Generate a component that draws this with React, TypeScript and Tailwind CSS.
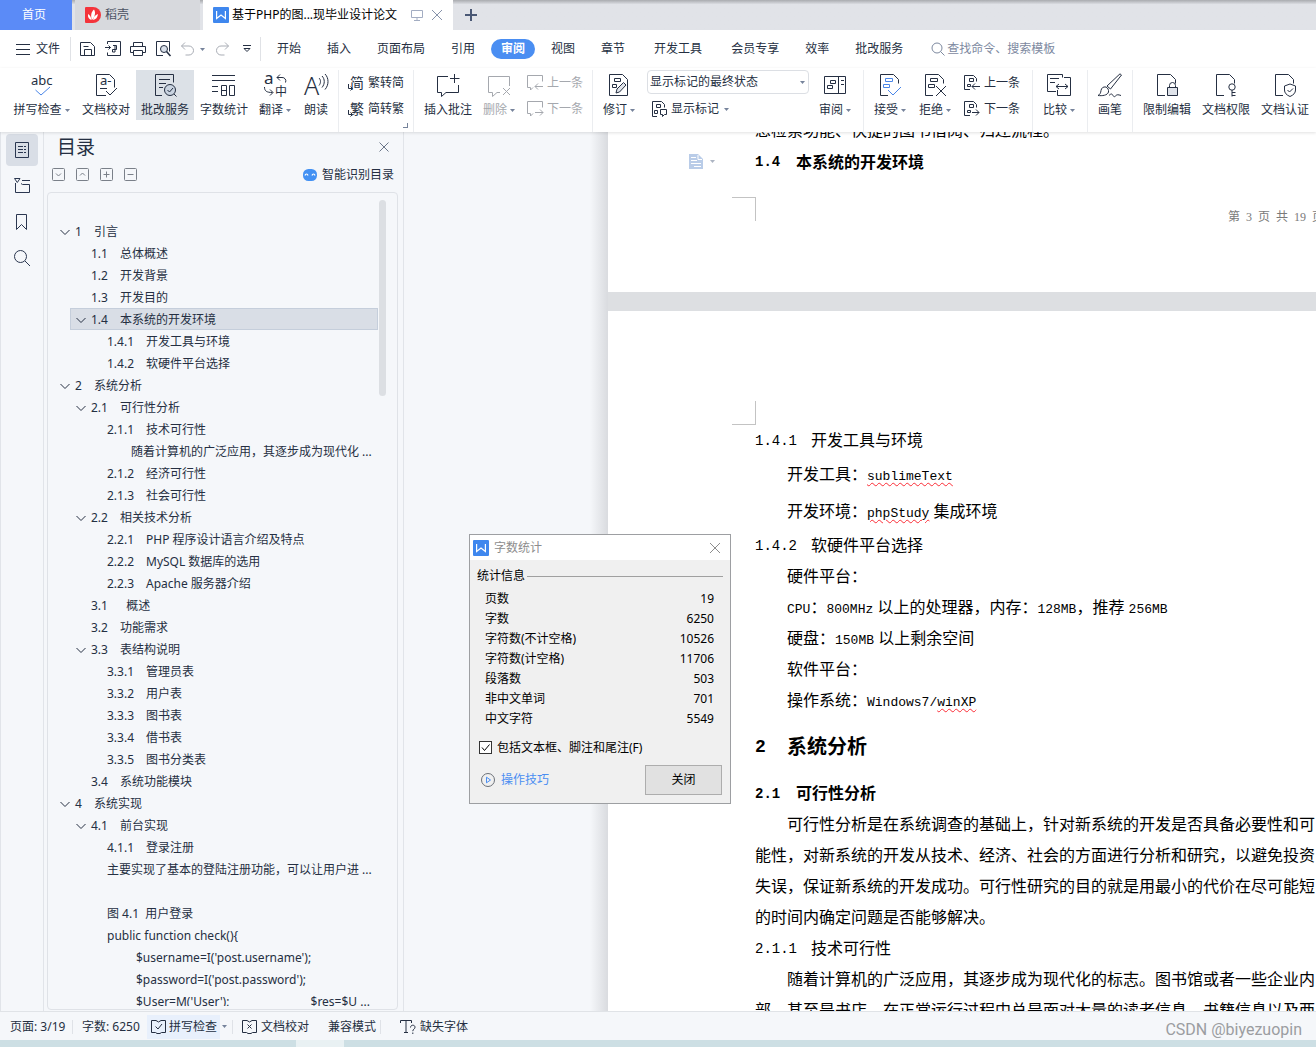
import React, { useState } from "react";
import clsx from "clsx";

type IconProps = {
  d?: string;
  size?: number;
  className?: string;
  children?: React.ReactNode;
};

function Icon({ d, size = 24, className, children }: IconProps) {
  return (
    <svg
      width={size}
      height={size}
      viewBox={`0 0 ${size} ${size}`}
      fill="none"
      stroke="currentColor"
      strokeWidth={1}
      aria-hidden="true"
      className={clsx("shrink-0 overflow-visible", className)}
    >
      {d && <path d={d} />}
      {children}
    </svg>
  );
}

function Caret({ className }: { className?: string }) {
  return (
    <svg width="5" height="3" viewBox="0 0 5 3" aria-hidden="true" className={clsx("shrink-0 fill-[#76839b]", className)}>
      <path d="M0 0h5L2.5 3z" />
    </svg>
  );
}

function WpsLogo({ className }: { className?: string }) {
  return (
    <svg width="16" height="16" viewBox="0 0 16 16" aria-hidden="true" className={clsx("shrink-0", className)}>
      <rect width="16" height="16" rx="1" fill="#3f87ee" />
      <path d="M3.600 4v7.500L8 8l4.400 3.500V4" fill="none" stroke="#fff" strokeWidth="1.200" />
    </svg>
  );
}

function Sep() {
  return <span className="h-[62px] w-px shrink-0 bg-[#ebedf0]" />;
}

type ToolProps = {
  label: string;
  icon: React.ReactNode;
  width: string;
  caret?: boolean;
  active?: boolean;
  disabled?: boolean;
};

function Tool({ label, icon, width, caret, active, disabled }: ToolProps) {
  return (
    <button
      disabled={disabled}
      className={clsx(
        "flex h-[50px] shrink-0 flex-col items-center gap-[3px] pt-[3px]",
        width,
        active && "bg-[#dce1e7]",
        disabled && "text-[#a5a8ae]"
      )}
    >
      {icon}
      <span className="flex items-center gap-[3px] leading-5 whitespace-nowrap">
        {label}
        {caret && <Caret />}
      </span>
    </button>
  );
}

function SmallTool({ label, icon, caret, disabled }: Omit<ToolProps, "width" | "active">) {
  return (
    <button disabled={disabled} className={clsx("flex h-6 items-center gap-1 whitespace-nowrap", disabled && "text-[#a5a8ae]")}>
      {icon}
      {label}
      {caret && <Caret className="ml-px" />}
    </button>
  );
}

const docShape = "M10 22.5H2.5v-21h13l5 5v4";
const markBoxes = "M7.5 5.5h7v3h-7z M5.5 11.5h6v3h-6z";

const menus = ["开始", "插入", "页面布局", "引用", "审阅", "视图", "章节", "开发工具", "会员专享", "效率", "批改服务"];

type Node = { level: number; num?: string; text: string; open?: boolean };

const outline: Node[] = [
  { level: 1, num: "1", text: "引言", open: true },
  { level: 2, num: "1.1", text: "总体概述" },
  { level: 2, num: "1.2", text: "开发背景" },
  { level: 2, num: "1.3", text: "开发目的" },
  { level: 2, num: "1.4", text: "本系统的开发环境", open: true },
  { level: 3, num: "1.4.1", text: "开发工具与环境" },
  { level: 3, num: "1.4.2", text: "软硬件平台选择" },
  { level: 1, num: "2", text: "系统分析", open: true },
  { level: 2, num: "2.1", text: "可行性分析", open: true },
  { level: 3, num: "2.1.1", text: "技术可行性" },
  { level: 4, text: "随着计算机的广泛应用，其逐步成为现代化 ..." },
  { level: 3, num: "2.1.2", text: "经济可行性" },
  { level: 3, num: "2.1.3", text: "社会可行性" },
  { level: 2, num: "2.2", text: "相关技术分析", open: true },
  { level: 3, num: "2.2.1", text: "PHP 程序设计语言介绍及特点" },
  { level: 3, num: "2.2.2", text: "MySQL 数据库的选用" },
  { level: 3, num: "2.2.3", text: "Apache 服务器介绍" },
  { level: 2, num: "3.1", text: "\u00a0\u00a0概述" },
  { level: 2, num: "3.2", text: "功能需求" },
  { level: 2, num: "3.3", text: "表结构说明", open: true },
  { level: 3, num: "3.3.1", text: "管理员表" },
  { level: 3, num: "3.3.2", text: "用户表" },
  { level: 3, num: "3.3.3", text: "图书表" },
  { level: 3, num: "3.3.4", text: "借书表" },
  { level: 3, num: "3.3.5", text: "图书分类表" },
  { level: 2, num: "3.4", text: "系统功能模块" },
  { level: 1, num: "4", text: "系统实现", open: true },
  { level: 2, num: "4.1", text: "前台实现", open: true },
  { level: 3, num: "4.1.1", text: "登录注册" },
  { level: 3, text: "主要实现了基本的登陆注册功能，可以让用户进 ..." },
  { level: 3, text: "" },
  { level: 3, text: "图 4.1  用户登录" },
  { level: 3, text: "public function check(){" },
  { level: 5, text: "$username=I('post.username');" },
  { level: 5, text: "$password=I('post.password');" },
  { level: 5, text: "$User=M('User');                          $res=$U ..." },
];

const indent: Record<number, string> = {
  1: "ml-1.5",
  2: "ml-[22px]",
  3: "ml-[38px]",
  4: "ml-[62px]",
  5: "ml-[67px]",
};

const numWidth: Record<number, string> = {
  1: "w-[19px]",
  2: "w-[29px]",
  3: "w-[39px]",
};

const stats = [
  ["页数", "19"],
  ["字数", "6250"],
  ["字符数(不计空格)", "10526"],
  ["字符数(计空格)", "11706"],
  ["段落数", "503"],
  ["非中文单词", "701"],
  ["中文字符", "5549"],
];

function TitleTabs() {
  return (
    <div className="flex h-[30px] shrink-0 bg-gradient-to-b from-[#a9abaf] via-[#e1e3e8] via-15% to-[#e1e3e8]">
      <button className="mr-[3px] w-[72px] bg-[#5b8bf7] pr-1 text-white">首页</button>
      <button className="mr-[3px] flex w-[125px] items-center gap-1 bg-[#d7d9dd] pl-[10px] text-[#4b5263]">
        <svg width="16" height="16" viewBox="0 0 16 16" aria-hidden="true">
          <path d="M1 0h7a8 8 0 010 16H1a1 1 0 01-1-1V1a1 1 0 011-1z" fill="#f4343b" />
          <path d="M9 2.500c2 3 1 7-2 10.500C5.500 9 6 5 9 2.500z M3 7c2 1 3 3 3.500 6C4 12.500 2.500 10 3 7z M13 7c-.5 3.500-2 5.500-5 6 .5-3 2-5 5-6z" fill="#fff" />
        </svg>
        稻壳
      </button>
      <div className="flex w-[250px] items-center bg-white pl-[10px] text-black">
        <WpsLogo className="mr-[3px]" />
        <span className="whitespace-nowrap">基于PHP的图...现毕业设计论文</span>
        <Icon size={12} className="ml-auto text-[#a3adc2]" d="M.5 1.500h11v7H.5z M6 8.500v3 M3 11.500h6" />
        <button aria-label="关闭标签" className="mr-[10px] ml-2 text-[#8793ab]">
          <Icon size={12} d="M1 1l10 10M11 1L1 11" />
        </button>
      </div>
      <button aria-label="新建" className="ml-3 text-[#4a5875]">
        <Icon size={12}>
          <path d="M6 0v12M0 6h12" strokeWidth="2" />
        </Icon>
      </button>
    </div>
  );
}

function MenuBar() {
  return (
    <nav className="flex h-[38px] shrink-0 items-center bg-white">
      <button className="flex w-[70px] items-center gap-[6px] pl-4">
        <Icon size={14} d="M0 2.500h14M0 7.500h14M0 12.500h14" />
        文件
      </button>
      <span className="h-6 w-px bg-[#e0e2e6]" />
      <div className="flex w-[189px] items-center pl-[9px]">
        <button aria-label="保存">
          <Icon size={16} d="M.5 14.500V1.500h10l4 4v9z M4.500 14.500v-6h7v6 M3.500 5.500h5" />
        </button>
        <button aria-label="输出为PDF" className="ml-[9px]">
          <Icon size={16} d="M2.500 3V.5h13v14h-13v-3 M0 6.500h5.500M3.500 4.500l2 2-2 2 M8 4.500h3.500v4H7.500v2.500h2.500V4.500" />
        </button>
        <button aria-label="打印" className="ml-[9px]">
          <Icon size={16} d="M3.500 5.500v-4h9v4 M3.500 11.500h-3v-6h15v6h-3 M3.500 9.500h9v5h-9z" />
        </button>
        <button aria-label="打印预览" className="ml-[9px]">
          <Icon size={16} d="M8 14.500H1.500V.5h13v10">
            <circle cx="9" cy="8" r="3.500" fill="#d9e0ea" />
            <path d="M11.500 10.500l4 4.500" strokeWidth="1.600" />
          </Icon>
        </button>
        <button aria-label="撤销" className="ml-[9px] text-[#a9adb5]">
          <Icon size={16} d="M5 1.500L1.500 5 5 8.500 M1.500 5h7.500a4.500 4.500 0 010 9H5.500" />
        </button>
        <Caret className="ml-1" />
        <button aria-label="恢复" className="ml-[9px] text-[#a9adb5]">
          <Icon size={16} d="M11 1.500L14.500 5 11 8.500 M14.500 5H7a4.500 4.500 0 000 9h3.500" />
        </button>
        <button aria-label="自定义" className="ml-[13px]">
          <Icon size={8} d="M0 .5h8 M1 3.500h6L4 6.500z" />
        </button>
      </div>
      <span className="mr-[3px] h-6 w-px bg-[#e0e2e6]" />
      {menus.map((m) => (
        <button
          key={m}
          className={clsx(
            "shrink-0 whitespace-nowrap",
            m === "审阅"
              ? "mx-[3px] h-5 rounded-full bg-[#4a8ef2] px-[10px] leading-5 font-bold text-white"
              : m === "开发工具"
                ? "px-4"
                : "px-[13px]"
          )}
        >
          {m}
        </button>
      ))}
      <label className="ml-[15px] flex flex-1 items-center gap-0.5 text-[#7d899f]">
        <Icon size={14} d="M9.500 9.500l4 4">
          <circle cx="6" cy="6" r="5" />
        </Icon>
        <input placeholder="查找命令、搜索模板" aria-label="查找命令" className="w-40 outline-none placeholder:text-[#7d899f]" />
      </label>
    </nav>
  );
}

function Ribbon() {
  const [view, setView] = useState("显示标记的最终状态");
  return (
    <div className="relative z-10 flex h-16 shrink-0 bg-white pt-0.5 pl-[7px] shadow-[0_1px_3px_rgba(0,0,0,0.12)]">
      <Tool
        label="拼写检查"
        width="w-[69px]"
        caret
        icon={
          <Icon>
            <text x="1" y="12" fontSize="13" fill="currentColor" stroke="none">abc</text>
            <path d="M5.500 17l5.500 5 9-8" stroke="#4a86e8" />
          </Icon>
        }
      />
      <Tool
        label="文档校对"
        width="w-[60px]"
        icon={
          <Icon d="M12 22.500H2.500v-21h13l5 5v8 M6 15.500h7 M12 18l4 4 7-7">
            <text x="6" y="12" fontSize="13" fill="currentColor" stroke="none">a-</text>
          </Icon>
        }
      />
      <Tool
        label="批改服务"
        width="w-[58px]"
        active
        icon={
          <Icon d="M9 22.500H2.500v-21h18v8 M6 6.500h11 M6 10.500h7 M6 14.500h4">
            <circle cx="17" cy="17" r="5.500" fill="#c9d3e0" />
            <path d="M14.500 17l2 2 3.500-4 M21 21l2.500 2.500" />
          </Icon>
        }
      />
      <Tool
        label="字数统计"
        width="w-[60px]"
        icon={<Icon d="M0 2.500h23 M0 7.500h23 M0 13.500h6 M0 18.500h6 M9.500 12.500h5v10h-5z M9.500 17.500h5 M17.500 12.500h5v10h-5z" />}
      />
      <Tool
        label="翻译"
        width="w-[42px]"
        caret
        icon={
          <Icon d="M17 1.500l-3 3 3 3 M14 4.500h5a3.500 3.500 0 013.500 5 M1.500 14c0 4 2 5.500 8 5.500 M7 16.500l3 3-3 3">
            <text x="1" y="11" fontSize="17" fill="currentColor" stroke="none">a</text>
            <text x="12" y="23" fontSize="12" fill="currentColor" stroke="none">中</text>
          </Icon>
        }
      />
      <Tool
        label="朗读"
        width="w-[40px]"
        icon={
          <Icon d="M15 5c2 2 2 5 0 7.500 M18 3c3 3 3 8 0 11.500 M21 1c4 4 4 11 0 15.500">
            <text x="0" y="22" fontSize="25" fontWeight="300" fill="currentColor" stroke="none">A</text>
          </Icon>
        }
      />
      <span className="w-0.5" />
      <Sep />
      <div className="relative flex flex-col gap-0.5 px-[9px] pt-px">
        <SmallTool
          label="繁转简"
          icon={
            <Icon size={16} d="M.5 9v4.500H4 M2.500 11.500l2 2-2 2">
              <text x="2" y="13" fontSize="14" fill="currentColor" stroke="none">简</text>
            </Icon>
          }
        />
        <SmallTool
          label="简转繁"
          icon={
            <Icon size={16} d="M.5 9v4.500H4 M2.500 11.500l2 2-2 2">
              <text x="2" y="13" fontSize="14" fill="currentColor" stroke="none">繁</text>
            </Icon>
          }
        />
        <span className="absolute right-[5px] bottom-1 size-[5px] border-r border-b border-[#76839b]" />
      </div>
      <Sep />
      <span className="w-[3px]" />
      <Tool label="插入批注" width="w-[62px]" icon={<Icon d="M12 3.500H1.500v16h4v4l4.500-4h12.500V12 M18.500 1v9 M14 5.500h9.500" />} />
      <Tool label="删除" width="w-[40px]" caret disabled icon={<Icon d="M13 19.500h-3l-4.500 4v-4h-4v-16h21V13 M16 15l7 7 M23 15l-7 7" />} />
      <div className="flex flex-col gap-0.5 pt-px pr-[9px] pl-2">
        <SmallTool label="上一条" disabled icon={<Icon size={16} d="M6 12.500l-2.500 2.500v-2.500H.5v-12h15v6 M16 11.500H8 M11 8.500l-3 3 3 3" />} />
        <SmallTool label="下一条" disabled icon={<Icon size={16} d="M6 12.500l-2.500 2.500v-2.500H.5v-12h15v6 M8 11.500h8 M13 8.500l3 3-3 3" />} />
      </div>
      <Sep />
      <Tool
        label="修订"
        width="w-[52px]"
        caret
        icon={
          <Icon d="M2.500 1.500h13l5 5v16h-18z M7.500 5.500h6v3h-6z M5.500 11.500h4v3h-4z">
            <path d="M9 20l1-4 6.500-6.500 2.500 2.500-6.500 7z" fill="#dfe3ea" />
          </Icon>
        }
      />
      <div className="ml-0.5 flex w-[162px] shrink-0 flex-col gap-0.5">
        <div className="relative">
          <select
            aria-label="标记状态"
            value={view}
            onChange={(e) => setView(e.target.value)}
            className="h-6 w-full appearance-none rounded-sm border border-[#dcdfe4] bg-white pl-[2px]"
          >
            <option>显示标记的最终状态</option>
            <option>最终状态</option>
            <option>原始状态</option>
          </select>
          <Caret className="pointer-events-none absolute top-[11px] right-1" />
        </div>
        <div className="pt-px pl-1">
          <SmallTool
            label="显示标记"
            caret
            icon={<Icon size={16} d="M6 15.500H1.500V.5h9l3 3v3 M5.500 3.500h4v3h-4z M3.500 9.500h3v3h-3z M9.500 8.500h6v5h-2l-2 2v-2h-2z" />}
          />
        </div>
      </div>
      <Tool label="审阅" width="w-[52px]" caret icon={<Icon d="M1.500 3.500h21v17h-21z M15.500 3.500v17 M7.500 7.500h5v3h-5z M4.500 12.500h5v3h-5z M18 7.500h3 M18 11.500h3" />} />
      <span className="w-0.5" />
      <Sep />
      <span className="w-[3px]" />
      <Tool
        label="接受"
        width="w-[46px]"
        caret
        icon={
          <Icon d={docShape}>
            <path d={markBoxes} stroke="#4a86e8" />
            <path d="M10 17l5 5 8-8" stroke="#4a86e8" />
          </Icon>
        }
      />
      <Tool label="拒绝" width="w-[44px]" caret icon={<Icon d={`${docShape} ${markBoxes} M13 13l10 10 M23 13L13 23`} />} />
      <div className="flex flex-col gap-0.5 pt-px pr-3 pl-[7px]">
        <SmallTool label="上一条" icon={<Icon size={16} d="M6 14.500H.5V.5h9l3 3v3 M5.500 3.500h4v3h-4z M3.500 9.500h3v2h-3z M16 11.500H8 M11 8.500l-3 3 3 3" />} />
        <SmallTool label="下一条" icon={<Icon size={16} d="M6 14.500H.5V.5h9l3 3v3 M5.500 3.500h4v3h-4z M3.500 9.500h3v2h-3z M8 11.500h7 M12 8.500l3 3-3 3" />} />
      </div>
      <Sep />
      <Tool
        label="比较"
        width="w-[52px]"
        caret
        icon={<Icon d="M9 18.500H.5v-17h15v3 M3 5.500h9 M3 9.500h5 M17 4.500h6.500v18h-13V17 M9 13.500h12 M12 11l-3 2.500 3 2.500 M18 11l3 2.500-3 2.500" />}
      />
      <span className="w-0.5" />
      <Sep />
      <Tool
        label="画笔"
        width="w-[44px]"
        icon={<Icon d="M22 .8L9 13l3.500 3L23.500 2z M8 14c-3-.5-4.500 1-5 3.500-.3 2.500-1 4-3 5 4 .5 9.500 0 10.500-3.500.3-2-.5-4-2.500-5z M11 22.500c2-2 3-2 4 0s2 1 3 0 2-1 5 0" />}
      />
      <Sep />
      <span className="w-1" />
      <Tool
        label="限制编辑"
        width="w-[60px]"
        icon={
          <Icon d={docShape}>
            <path d="M14.500 14v-1.500a3 3 0 016 0V14" />
            <path d="M12.500 14.500h10v8h-10z" fill="#dfe3ea" />
          </Icon>
        }
      />
      <Tool
        label="文档权限"
        width="w-[58px]"
        icon={
          <Icon d={docShape}>
            <circle cx="18" cy="14" r="3.200" />
            <path d="M18 17v6.500 M18 19.500h3.500 M18 22.500h3.500" />
          </Icon>
        }
      />
      <Tool
        label="文档认证"
        width="w-[60px]"
        icon={<Icon d={`${docShape} M17 11l5.500 2v4c0 3-2 5-5.500 6.500-3.500-1.500-5.500-3.500-5.500-6.500v-4z M14.500 17l2 2 3.500-3.500`} />}
      />
    </div>
  );
}

function Rail() {
  return (
    <div className="flex w-11 shrink-0 flex-col gap-1 border-x border-[#e1e4e9] pt-0.5 pl-[5px] text-[#2b3750]">
      <button aria-label="目录" className="flex size-8 items-center justify-center rounded-sm bg-[#d9dee6]">
        <Icon size={16} d="M1.500 .5h13v15h-13z M4 4.500h5 M10 4.500h2 M4 7.500h5 M10 7.500h2 M4 10.500h5 M10 10.500h2" />
      </button>
      <button aria-label="章节" className="flex size-8 items-center justify-center">
        <Icon size={16} d="M8 2.500h8 M.5 .5h5.500L3.300 4.500z M1.500 5v9.500h14v-8h-7l-1.500-1" />
      </button>
      <button aria-label="书签" className="flex size-8 items-center justify-center">
        <Icon size={16} d="M2.500 .5h10v15l-5-5-5 5z" />
      </button>
      <button aria-label="查找" className="flex size-8 items-center justify-center">
        <Icon size={16} d="M11 11l5 5">
          <circle cx="6.500" cy="6.500" r="6" />
        </Icon>
      </button>
    </div>
  );
}

function Outline() {
  const [current, setCurrent] = useState("1.4");
  return (
    <aside className="flex w-[360px] shrink-0 flex-col border-r border-[#e1e4e9] pr-[5px] pl-[3px]">
      <div className="flex h-[30px] items-center justify-between pr-2 pl-[10px]">
        <h2 className="pt-0.5 text-[19px]">目录</h2>
        <button aria-label="关闭目录" className="text-[#6b7689]">
          <Icon size={12} d="M1.500 1.500l9 9M10.500 1.500l-9 9" />
        </button>
      </div>
      <div className="flex h-[30px] items-center gap-[11px] pr-1 pb-[6px] pl-[5px] text-[#7a8089]">
        {["M4 5.500l2.500 2.500L9 5.500", "M4 7.500L6.500 5 9 7.500", "M3.500 6.500h6M6.500 3.500v6", "M3.500 6.500h6"].map((d) => (
          <button key={d} aria-label="展开级别">
            <Icon size={13} d={d}>
              <rect x=".5" y=".5" width="12" height="12" rx="1" />
            </Icon>
          </button>
        ))}
        <button className="ml-auto flex items-center gap-[5px] pt-px text-[#252f42]">
          <svg width="14" height="12" viewBox="0 0 14 12" aria-hidden="true">
            <rect width="14" height="12" rx="5.500" fill="#4391f3" />
            <path d="M2 6.500c.5-2 2.500-2 3 0 M9 6.500c.5-2 2.500-2 3 0" fill="none" stroke="#fff" strokeWidth="1.200" />
          </svg>
          智能识别目录
        </button>
      </div>
      <div className="mb-px flex min-h-0 flex-1 overflow-hidden rounded-sm border border-[#dfe2e7] pb-[3px]">
        <div className="min-w-0 flex-1 overflow-hidden pt-[27px]">
          {outline.map((n, i) => (
            <button
              key={i}
              onClick={() => n.num && setCurrent(n.num)}
              className={clsx(
                "flex h-[22px] items-center border pt-0.5 text-left whitespace-pre",
                indent[n.level],
                n.num === current ? "border-[#c5cedb] bg-[#d9dee6]" : "border-transparent",
                n.level === 1 && "w-[324px]",
                n.level === 2 && "w-[308px]"
              )}
            >
              <span className="flex w-5 shrink-0 pl-[5px]">
                {n.open && <Icon size={10} d="M.5 3L5 7.500 9.500 3" />}
              </span>
              {n.num && <span className={clsx("shrink-0", numWidth[n.level])}>{n.num}</span>}
              {n.text}
            </button>
          ))}
        </div>
        <span className="mt-[7px] mr-[11px] h-[196px] w-[7px] shrink-0 rounded-full bg-[#dcdfe3]" />
      </div>
    </aside>
  );
}

function Latin({ children, className }: { children: React.ReactNode; className?: string }) {
  return <span className={clsx("font-['Liberation_Mono',monospace] text-[13px] leading-none", className)}>{children}</span>;
}

const wavy = "underline decoration-red-500 decoration-wavy decoration-1 underline-offset-2";

function Heading({ num, children, level }: { num: string; children: React.ReactNode; level: 1 | 2 | 3 }) {
  return (
    <h3
      className={clsx(
        "flex items-center",
        level === 1 && "h-[62px] text-xl font-bold",
        level === 2 && "h-[31px] font-bold",
        level === 3 && "h-[31px]"
      )}
    >
      <span
        className={clsx(
          "shrink-0 font-['Liberation_Mono',monospace]",
          level === 1 && "w-8 text-lg",
          level === 2 && "w-[41px] text-sm",
          level === 3 && "w-[56px] text-sm"
        )}
      >
        {num}
      </span>
      {children}
    </h3>
  );
}

function Document() {
  return (
    <main className="flex min-w-0 flex-1 overflow-hidden pl-[186px] text-base whitespace-nowrap text-black">
      <div className="w-[18px] shrink-0 bg-gradient-to-r from-[#f5f7fa] to-[#d9dbdf]" />
      <div className="flex min-w-0 flex-1 flex-col gap-[19px] bg-[#dddfe2]">
        <section className="h-40 shrink-0 bg-white">
          <p className="-mt-[17px] pl-[147px] leading-[31px]">息检索功能、快捷的图书借阅、归还流程。</p>
          <div className="flex pl-[81px]">
            <button aria-label="段落布局" className="flex w-[66px] items-center gap-[7px]">
              <svg width="14" height="15" viewBox="0 0 14 15" aria-hidden="true">
                <path d="M0 0h9l5 5v10H0z" fill="#b9cce8" />
                <path d="M2 3.500h5M2 6.500h6M2 9.500h10M5 12.500h7M9 1v4.500h4" fill="none" stroke="#fff" />
              </svg>
              <Caret className="opacity-60" />
            </button>
            <Heading num="1.4" level={2}>本系统的开发环境</Heading>
          </div>
          <div className="mt-5 flex pl-[124px]">
            <span className="size-6 shrink-0 border-t border-r border-[#c3c3c3]" />
            <span className="ml-[472px] flex gap-[6px] pt-3 font-['Liberation_Serif','Noto_Sans_CJK_SC',serif] text-xs text-[#7a7a7a]">
              <span>第</span>
              <span>3</span>
              <span>页</span>
              <span>共</span>
              <span>19</span>
              <span>页</span>
            </span>
          </div>
        </section>
        <section className="flex-1 bg-white pt-[90px] pl-[147px] leading-[31px]">
          <div className="-ml-[23px] size-6 border-r border-b border-[#c3c3c3]" />
          <Heading num="1.4.1" level={3}>开发工具与环境</Heading>
          <p className="pl-8 leading-[37px]">
            开发工具：<Latin className={wavy}>sublimeText</Latin>
          </p>
          <p className="pl-8 leading-[37px]">
            开发环境：<Latin className={wavy}>phpStudy</Latin> 集成环境
          </p>
          <Heading num="1.4.2" level={3}>软硬件平台选择</Heading>
          <div className="pl-8">
            <p>硬件平台：</p>
            <p>
              <Latin>CPU</Latin>：<Latin>800MHz</Latin> 以上的处理器，内存：<Latin>128MB</Latin>，推荐 <Latin>256MB</Latin>
            </p>
            <p>
              硬盘：<Latin>150MB</Latin> 以上剩余空间
            </p>
            <p>软件平台：</p>
            <p>
              操作系统：<Latin>Windows7/</Latin>
              <Latin className={wavy}>winXP</Latin>
            </p>
          </div>
          <Heading num="2" level={1}>系统分析</Heading>
          <Heading num="2.1" level={2}>可行性分析</Heading>
          <p>
            <span className="pl-8">可行性分析是在系统调查的基础上，针对新系统的开发是否具备必要性和可</span>
            <br />
            能性，对新系统的开发从技术、经济、社会的方面进行分析和研究，以避免投资
            <br />
            失误，保证新系统的开发成功。可行性研究的目的就是用最小的代价在尽可能短
            <br />
            的时间内确定问题是否能够解决。
          </p>
          <Heading num="2.1.1" level={3}>技术可行性</Heading>
          <p>
            <span className="pl-8">随着计算机的广泛应用，其逐步成为现代化的标志。图书馆或者一些企业内</span>
            <br />
            部，甚至是书店，在正常运行过程中总是面对大量的读者信息，书籍信息以及两
          </p>
        </section>
      </div>
    </main>
  );
}

function WordCountDialog({ onClose }: { onClose: () => void }) {
  const [include, setInclude] = useState(true);
  return (
    <div role="dialog" aria-label="字数统计" className="fixed top-[534px] left-[469px] z-20 w-[262px] border border-[#9d9fa2] bg-[#f0f0f0] text-black">
      <div className="flex h-[25px] items-center bg-white pr-[9px] pl-[3px] text-[#8d8d8d]">
        <WpsLogo className="mr-[5px]" />
        字数统计
        <button aria-label="关闭对话框" onClick={onClose} className="ml-auto">
          <Icon size={12} d="M1 1l10 10M11 1L1 11" />
        </button>
      </div>
      <div className="px-[7px] pt-[5px] pb-2">
        <div className="flex h-[22px] items-center gap-0.5">
          统计信息
          <span className="h-px flex-1 bg-[#a0a0a0]" />
        </div>
        <table className="mt-0.5 w-full">
          <tbody>
            {stats.map(([name, value]) => (
              <tr key={name} className="h-5 leading-5">
                <th scope="row" className="p-0 pl-2 text-left font-normal">{name}</th>
                <td className="p-0 pr-[9px] text-right">{value}</td>
              </tr>
            ))}
          </tbody>
        </table>
        <label className="relative mt-2 flex h-5 items-center gap-[5px] pl-0.5">
          <input
            type="checkbox"
            checked={include}
            onChange={(e) => setInclude(e.target.checked)}
            className="size-[13px] appearance-none border border-[#333] bg-white"
          />
          {include && <Icon size={13} d="M3 6.500l2.500 3 5-6" className="pointer-events-none absolute left-0.5" />}
          <span className="pt-0.5">包括文本框、脚注和尾注(F)</span>
        </label>
        <div className="mt-2 flex items-center justify-between pr-px pl-1">
          <a href="#tips" className="flex items-center gap-[6px] text-[#4a8ef2]">
            <Icon size={14}>
              <circle cx="7" cy="7" r="6.500" stroke="#6c7078" />
              <path d="M5.500 4.200L9.500 7l-4 2.800z" />
            </Icon>
            操作技巧
          </a>
          <button onClick={onClose} className="h-[30px] w-[77px] border border-[#adadad] bg-[#e1e1e1]">关闭</button>
        </div>
      </div>
    </div>
  );
}

function StatusBar() {
  return (
    <footer className="z-10 flex h-[29px] shrink-0 items-center border-t border-[#e0e3e7] bg-[#f5f7fa] pt-px pl-[10px]">
      <span className="w-[62px]">页面: 3/19</span>
      <span className="h-[14px] w-px bg-[#dfe2e7]" />
      <span className="w-[74px] pl-[9px] whitespace-nowrap">字数: 6250</span>
      <button className="flex h-6 w-[73px] items-center gap-[3px] bg-[#e8f0fc] pl-1 whitespace-nowrap">
        <Icon size={15} d="M5 1.500H.5v12h4l1.500 1h3l1.500-1h4v-12H10 M5 1.500L7.500 3 10 1.500 M4.500 7.500l2.500 2.500 4-5" />
        拼写检查
      </button>
      <Caret className="ml-0.5" />
      <span className="ml-[5px] h-[14px] w-px bg-[#dfe2e7]" />
      <button className="ml-[9px] flex items-center gap-1 whitespace-nowrap">
        <Icon size={15} d="M5 1.500H.5v12h4l1.500 1h3l1.500-1h4v-12H10 M5 1.500L7.500 3 10 1.500 M5.500 5.500l4 4 M9.500 5.500l-4 4" />
        文档校对
      </button>
      <button className="mr-1 ml-[19px] whitespace-nowrap">兼容模式</button>
      <span className="h-[14px] w-px bg-[#dfe2e7]" />
      <button className="ml-[19px] flex items-center gap-1 whitespace-nowrap">
        <Icon size={16} d="M.5 4V1.500h11V4 M6 1.500v12 M4 13.500h4 M10.500 8.500c0-3 4.500-3 4.500-.3 0 2-2.200 1.800-2.200 4 M12.800 13.500v1.500" />
        缺失字体
      </button>
      <span className="mr-[14px] ml-auto pt-1.5 font-['Roboto',sans-serif] text-base text-[#9b9da1]">CSDN @biyezuopin</span>
    </footer>
  );
}

export default function App() {
  const [showDialog, setShowDialog] = useState(true);

  return (
    <div className="flex h-screen flex-col overflow-hidden bg-[#f5f7fa] font-['Noto_Sans','Noto_Sans_CJK_SC',sans-serif] text-xs text-[#252f42]">
      <TitleTabs />
      <MenuBar />
      <Ribbon />
      <div className="flex min-h-0 flex-1">
        <Rail />
        <Outline />
        <Document />
      </div>
      <StatusBar />
      {/* desktop strip under the window */}
      <div className="flex h-[7px] shrink-0 bg-[#cddfe4]">
        <span className="ml-[296px] w-12 bg-[#e9f1f3]" />
      </div>
      {showDialog && <WordCountDialog onClose={() => setShowDialog(false)} />}
    </div>
  );
}
